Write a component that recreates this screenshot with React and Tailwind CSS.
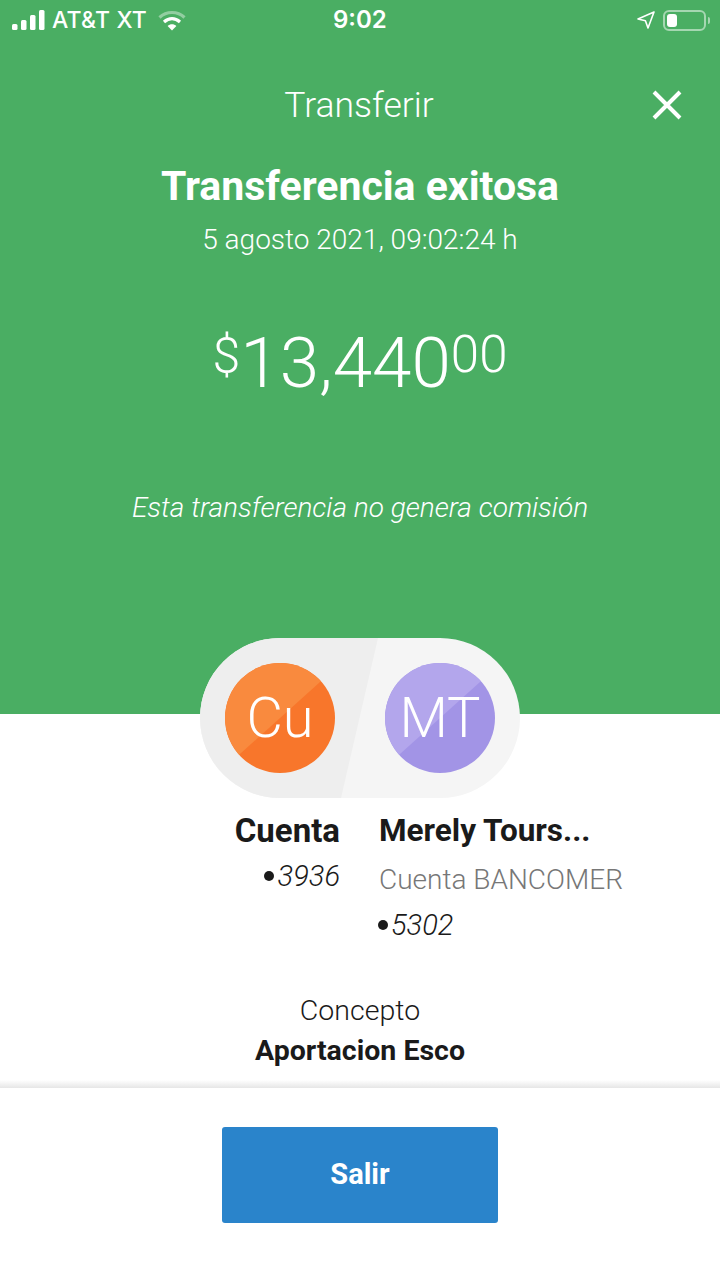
const font = "font-['Roboto','Open_Sans',sans-serif]";

function Signal() {
  return (
    <svg width="34" height="20" viewBox="0 0 34 20" fill="#fff">
      <rect x="0" y="14" width="5.5" height="6" rx="1.5" />
      <rect x="9" y="10" width="5.5" height="10" rx="1.5" />
      <rect x="18" y="5" width="5.5" height="15" rx="1.5" />
      <rect x="27" y="0" width="5.5" height="20" rx="1.5" />
    </svg>
  );
}

function Wifi() {
  return (
    <svg width="28" height="21" viewBox="0 0 28 21" fill="none">
      <path d="M1.5 7.5C8.5 .8 19.5 .8 26.5 7.5" stroke="#fff" strokeOpacity=".4" strokeWidth="3.2" />
      <path d="M6 12C11 7.6 17 7.6 22 12" stroke="#fff" strokeWidth="3.2" />
      <path d="M14 20.5 9.6 16C12 13.8 16 13.8 18.4 16Z" fill="#fff" />
    </svg>
  );
}

function Status() {
  return (
    <div className="h-10 flex items-center justify-between pl-3 pr-[10px] text-white relative">
      <div className="flex items-center">
        <Signal />
        <span className="ml-[6px] text-[23px] leading-none tracking-[0.2px] font-['Inter',sans-serif] font-medium">AT&amp;T XT</span>
        <span className="ml-[11px]"><Wifi /></span>
      </div>
      <span className="absolute left-[333px] top-[7px] text-[24px] leading-[26px] font-['Inter',sans-serif] font-semibold">9:02</span>
      <div className="flex items-center gap-[8px]">
        <svg width="18" height="18" viewBox="0 0 18 18" fill="none" stroke="#fff" strokeWidth="1.6" strokeLinejoin="round">
          <path d="M17 1 1 8l7.4 1.7L11 17Z" />
        </svg>
        <div className="flex items-center">
          <div className="w-[43px] h-[21px] rounded-[6px] border-2 border-white/50 p-[2px]">
            <div className="w-[10px] h-full rounded-[3px] bg-white" />
          </div>
          <div className="w-[2px] h-[7px] ml-[2px] bg-white/50 rounded-r" />
        </div>
      </div>
    </div>
  );
}

function Avatar({ text, base, light }) {
  return (
    <div className={`w-[110px] h-[110px] rounded-full relative overflow-hidden flex items-center justify-center ${base}`}>
      <div className={`absolute inset-0 [clip-path:polygon(0_0,100%_0,100%_5%,0_95%)] ${light}`} />
      <span className="relative text-white text-[56px] leading-none font-light">{text}</span>
    </div>
  );
}

export default function App() {
  return (
    <div className={`w-[720px] h-[1280px] bg-white flex flex-col overflow-hidden ${font}`}>
      <div className="h-[714px] shrink-0 bg-[#4aae63] text-white">
        <Status />
        <div className="relative h-[62px] mt-[35px] flex items-start justify-center">
          <span className="text-[35.5px] leading-[60px] font-light -ml-[2px]">Transferir</span>
          <svg className="absolute left-[651px] top-[14px]" width="32" height="32" viewBox="0 0 32 32" stroke="#fff" strokeWidth="4" fill="none">
            <path d="M3 3l26 26M29 3 3 29" />
          </svg>
        </div>
        <h1 className="mt-[21px] text-center text-[41px] leading-[56px] font-bold">Transferencia exitosa</h1>
        <p className="text-center text-[28px] leading-[40px] font-light mt-[6px]">5 agosto 2021, 09:02:24 h</p>
        <div className="mt-[58px] flex justify-center items-start font-light h-[90px]">
          <span className="text-[50px] leading-[56px] mt-[10px]">$</span>
          <span className="text-[71px] leading-[90px]">13,440</span>
          <span className="text-[51px] leading-[56px] mt-[9px]">00</span>
        </div>
        <p className="mt-[80px] text-center text-[28px] leading-[40px] italic font-light">Esta transferencia no genera comisión</p>
      </div>

      <div className="flex-1 flex flex-col relative">
        <div className="absolute left-[200px] top-[-76px] w-[320px] h-[160px] rounded-full bg-[#f5f5f5] overflow-hidden flex items-center justify-between px-[25px]">
          <div className="absolute left-0 top-0 bottom-0 w-[178px] bg-[#eeeeee] [clip-path:polygon(0_0,100%_0,141px_100%,0_100%)]" />
          <div className="relative"><Avatar text="Cu" base="bg-[#f8762b]" light="bg-[#f98a3e]" /></div>
          <div className="relative"><Avatar text="MT" base="bg-[#a294e6]" light="bg-[#b3a6ec]" /></div>
        </div>

        <div className="mt-[97px] flex gap-[40px]">
          <div className="w-[340px] shrink-0 text-right">
            <div className="text-[33px] leading-[40px] font-bold text-[#1a1a1a]">Cuenta</div>
            <div className="text-[29px] leading-[50px] italic text-[#1a1a1a] font-light flex justify-end items-center">
              <span className="w-[10px] h-[10px] rounded-full bg-[#1a1a1a] mr-[4px]" />3936
            </div>
          </div>
          <div className="flex-1">
            <div className="text-[31.5px] leading-[40px] font-bold text-[#1a1a1a] whitespace-nowrap -ml-[1px]">Merely Tours...</div>
            <div className="text-[28px] leading-[50px] mt-[4px] font-light text-[#777777] whitespace-nowrap -ml-[1px]">Cuenta BANCOMER</div>
            <div className="text-[29px] leading-[40px] italic text-[#1a1a1a] font-light flex items-center -ml-[2px]">
              <span className="w-[10px] h-[10px] rounded-full bg-[#1a1a1a] mr-[3px]" />5302
            </div>
          </div>
        </div>

        <div className="mt-[46px] text-center text-[#1a1a1a]">
          <div className="text-[28.5px] leading-[40px] font-light">Concepto</div>
          <div className="text-[28.5px] leading-[40px] font-bold">Aportacion Esco</div>
        </div>

        <div className="absolute left-0 right-0 top-[366px] h-[8px] bg-gradient-to-b from-white to-[#e6e6e6]" />
        <div className="absolute left-0 right-0 top-[374px] flex justify-center pt-[39px]">
          <button className="w-[276px] h-[96px] rounded-[3px] bg-[#2a84cb] text-white text-[29px] font-bold">Salir</button>
        </div>
      </div>
    </div>
  );
}
